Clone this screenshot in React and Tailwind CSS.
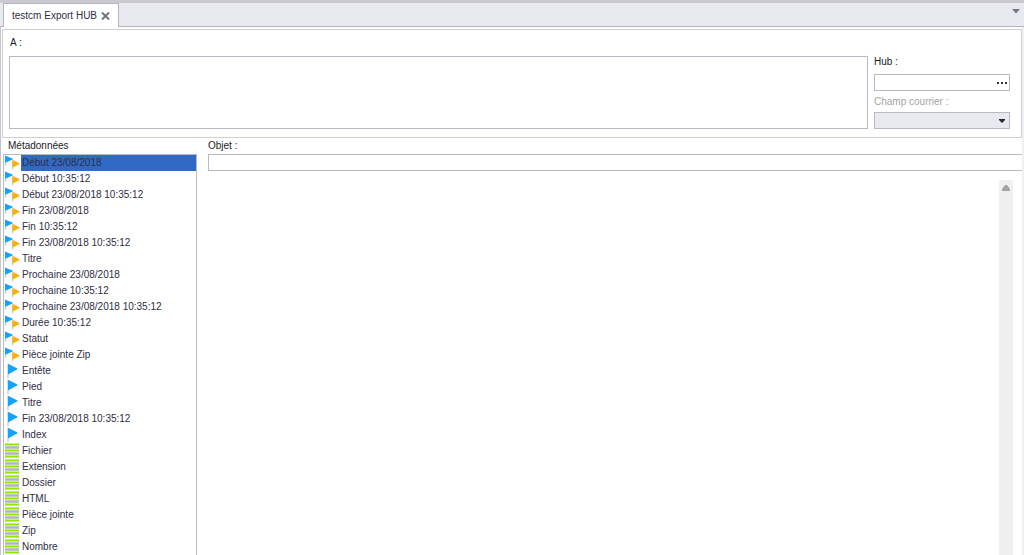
const METADATA = [
  { icon: 'double', label: 'Début 23/08/2018' },
  { icon: 'double', label: 'Début 10:35:12' },
  { icon: 'double', label: 'Début 23/08/2018 10:35:12' },
  { icon: 'double', label: 'Fin 23/08/2018' },
  { icon: 'double', label: 'Fin 10:35:12' },
  { icon: 'double', label: 'Fin 23/08/2018 10:35:12' },
  { icon: 'double', label: 'Titre' },
  { icon: 'double', label: 'Prochaine 23/08/2018' },
  { icon: 'double', label: 'Prochaine 10:35:12' },
  { icon: 'double', label: 'Prochaine 23/08/2018 10:35:12' },
  { icon: 'double', label: 'Durée 10:35:12' },
  { icon: 'double', label: 'Statut' },
  { icon: 'double', label: 'Pièce jointe Zip' },
  { icon: 'flag', label: 'Entête' },
  { icon: 'flag', label: 'Pied' },
  { icon: 'flag', label: 'Titre' },
  { icon: 'flag', label: 'Fin 23/08/2018 10:35:12' },
  { icon: 'flag', label: 'Index' },
  { icon: 'rows', label: 'Fichier' },
  { icon: 'rows', label: 'Extension' },
  { icon: 'rows', label: 'Dossier' },
  { icon: 'rows', label: 'HTML' },
  { icon: 'rows', label: 'Pièce jointe' },
  { icon: 'rows', label: 'Zip' },
  { icon: 'rows', label: 'Nombre' },
];

function DoubleFlagIcon() {
  return (
    <svg width="16" height="16" viewBox="0 0 16 16" aria-hidden="true">
      <path d="M0.5 1v10M7.5 5.5v9" stroke="#c8c8c8" strokeWidth="1" />
      <path d="M0 0.500l8 3.300v0.400L0 8z" fill="#12a5ff" />
      <path d="M7.500 4.800l7 3.500v0.600l-7 3.900z" fill="#ffae10" />
    </svg>
  );
}

function FlagIcon() {
  return (
    <svg width="16" height="16" viewBox="0 0 16 16" aria-hidden="true">
      <path d="M3 1v14" stroke="#b8b8b8" strokeWidth="1" />
      <path d="M3 0.800l9.500 4.800v0.600L3 11.600z" fill="#12a5ff" />
    </svg>
  );
}

function RowsIcon() {
  return (
    <svg width="16" height="16" viewBox="0 0 16 16" aria-hidden="true">
      <path d="M0 1.5h14M0 7.5h14M0 13.5h14" stroke="#8ce600" strokeWidth="2" />
      <path d="M0 4.5h14M0 10.5h14" stroke="#b4b4b4" strokeWidth="2.500" />
    </svg>
  );
}

const ICONS = { double: DoubleFlagIcon, flag: FlagIcon, rows: RowsIcon };

function MetadataItem({ icon, label, selected }) {
  const Icon = ICONS[icon];
  return (
    <li className="flex h-4">
      <button type="button" className="flex w-full items-center text-left">
        <Icon />
        <span className={selected ? 'h-4 flex-1 bg-[#316ac5] px-px leading-4' : 'h-4 flex-1 px-px leading-4'}>{label}</span>
      </button>
    </li>
  );
}

function TabBar() {
  return (
    <div className="flex h-[27px] items-stretch border-t-[3px] border-b border-t-[#c9c9cf] border-b-[#b4b4c0] bg-[#e9eaef]">
      <div className="-mb-px ml-[3px] flex items-center gap-1 border-x border-t border-[#b4b4c0] bg-white px-2">
        <span className="text-[#2e2e44]">testcm Export HUB</span>
        <button type="button" aria-label="Fermer">
          <svg width="9" height="8" viewBox="0 0 9 8">
            <path d="M1 0.5l7 7M8 0.5l-7 7" stroke="#74747f" strokeWidth="2" />
          </svg>
        </button>
      </div>
      <button type="button" aria-label="Onglets" className="mr-1 ml-auto flex items-start pt-[6px]">
        <svg width="9" height="5" viewBox="0 0 9 5">
          <path d="M1 0h8L5 4.5z" fill="#77778a" />
        </svg>
      </button>
    </div>
  );
}

function RecipientPanel() {
  return (
    <section className="mt-[2px] flex gap-[6px] border border-[#cfcfd8] pt-[5px] pr-[11px] pb-2 pl-[6px]">
      <div className="flex flex-1 flex-col">
        <label htmlFor="recipients" className="mb-[5px] pl-px">A :</label>
        <textarea id="recipients" className="block h-[73px] w-full resize-none border border-[#b9b9c4] bg-white outline-none" />
      </div>
      <div className="flex w-[136px] flex-col pt-[19px]">
        <label htmlFor="hub" className="mb-1">Hub :</label>
        <div className="flex h-[17px] border border-[#b9b9c4] bg-white">
          <input id="hub" className="min-w-0 flex-1 px-1 outline-none" />
          <button type="button" aria-label="Parcourir" className="flex w-[14px] items-center justify-center">
            <svg width="10" height="2" viewBox="0 0 10 2">
              <path d="M0 0h2v2H0zM4 0h2v2H4zM8 0h2v2H8z" fill="#2e2e44" />
            </svg>
          </button>
        </div>
        <label htmlFor="field" className="mt-[3px] mb-[2px] text-[#a3a3a3]">Champ courrier :</label>
        <div className="grid h-[17px] items-center border border-[#b9b9c4] bg-[#e9eaef]">
          <select id="field" disabled className="col-start-1 row-start-1 h-[15px] w-full appearance-none opacity-100" />
          <svg className="pointer-events-none col-start-1 row-start-1 mr-1 justify-self-end" width="6" height="4" viewBox="0 0 6 4">
            <path d="M0 0h6v1L3 4 0 1z" fill="#23233a" />
          </svg>
        </div>
      </div>
    </section>
  );
}

function MetadataPanel() {
  return (
    <section className="flex w-[194px] flex-col">
      <h2 className="pl-[5px]">Métadonnées</h2>
      <ul className="flex-1 overflow-hidden border-x border-t border-[#b9b9c4] pl-px text-[#2e2e44]">
        {METADATA.map((item, i) => (
          <MetadataItem key={i} icon={item.icon} label={item.label} selected={i === 0} />
        ))}
      </ul>
    </section>
  );
}

function MessagePanel() {
  return (
    <section className="flex flex-1 flex-col">
      <label htmlFor="subject">Objet :</label>
      <input id="subject" className="h-[17px] border-y border-l border-[#b9b9c4] px-1 outline-none" />
      <div className="mt-[9px] mr-[9px] flex flex-1 justify-end">
        <div className="flex w-[14px] justify-center bg-[#f0f0f0] pt-[5px]">
          <svg width="8" height="6" viewBox="0 0 8 6" aria-hidden="true">
            <path d="M3 0h2l3 4v2H0V4z" fill="#a3a3a3" />
          </svg>
        </div>
      </div>
    </section>
  );
}

export default function App() {
  return (
    <div className="flex h-screen flex-col overflow-hidden bg-white font-['Liberation_Sans',sans-serif] text-[10px] leading-4 text-[#1c1c28]">
      <TabBar />
      <main className="flex min-h-0 flex-1 flex-col border-r-2 border-l border-r-[#f0f0f4] border-l-[#c4c4cc] pl-px">
        <RecipientPanel />
        <div className="flex min-h-0 flex-1 gap-[11px] pl-px">
          <MetadataPanel />
          <MessagePanel />
        </div>
      </main>
    </div>
  );
}
